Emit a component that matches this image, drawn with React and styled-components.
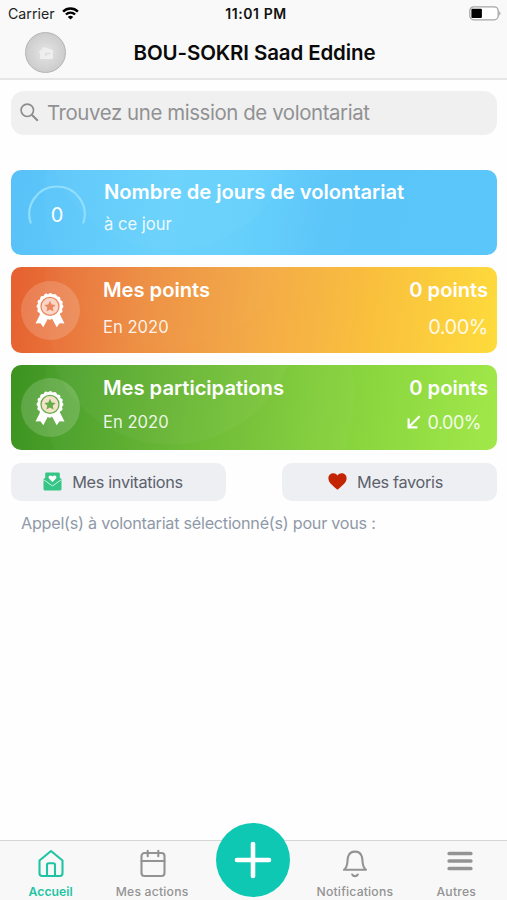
import React from "react";
import styled, { createGlobalStyle } from "styled-components";

const GlobalStyle = createGlobalStyle`
  * {
    box-sizing: border-box;
  }
  body {
    margin: 0;
    background: #fefefe;
    font-family: Inter, "Liberation Sans", sans-serif;
  }
`;

const Screen = styled.div`
  display: flex;
  flex-direction: column;
  height: 900px;
  width: 507px;
  overflow: hidden;
`;

const Top = styled.header`
  height: 80px;
  background: #f9f9f9;
  border-bottom: 2px solid #e6e6e6;
`;

const StatusBar = styled.div`
  display: grid;
  grid-template-columns: 1fr auto 1fr;
  align-items: center;
  height: 27px;
  padding: 0 6px 0 8px;
  color: #111;
  font-size: 14.2px;
`;

const Carrier = styled.div`
  display: flex;
  align-items: center;
  gap: 7px;
  color: #222;
`;

const Clock = styled.span`
  margin-left: 3px;
  font-weight: 600;
  font-size: 14px;
  letter-spacing: 0.6px;
`;

const BatterySlot = styled.div`
  display: flex;
  justify-content: flex-end;
`;

const NavBar = styled.div`
  display: grid;
  grid-template-columns: 80px 1fr 80px;
  align-items: center;
  height: 51px;
`;

const Avatar = styled.div`
  display: flex;
  align-items: center;
  justify-content: center;
  width: 41px;
  height: 41px;
  margin-left: 25px;
  border: 1.5px solid #b4b4b4;
  border-radius: 50%;
  background: radial-gradient(circle, #dedede 20%, #cbcbcb 75%);
`;

const Name = styled.h1`
  margin: 0 0 0 2px;
  text-align: center;
  white-space: nowrap;
  font-size: 20.5px;
  line-height: 26px;
  font-weight: 600;
  letter-spacing: -0.12px;
  color: #0a0a0a;
`;

const Main = styled.main`
  flex: 1;
  padding: 11px 10px 0 11px;
`;

const SearchBox = styled.div`
  display: flex;
  align-items: center;
  gap: 8px;
  height: 44px;
  padding: 0 0 1px 9px;
  border-radius: 13px;
  background: #f0f0f0;
  color: #919193;
  font-size: 20.4px;
  letter-spacing: -0.4px;
`;

const Cards = styled.div`
  display: grid;
  gap: 12px;
  margin-top: 34.5px;
`;

const Card = styled.section`
  display: flex;
  height: 85.5px;
  border-radius: 10px;
  background: ${(props) => props.$bg};
  color: #fff;
  padding-right: 9px;
`;

const Emblem = styled.div`
  display: flex;
  flex: none;
  align-items: center;
  justify-content: center;
  width: 59px;
  height: 59px;
  margin: 13.5px 23.5px 0 9.5px;
  border-radius: 50%;
  background: rgba(255, 255, 255, 0.17);
`;

const Gauge = styled.div`
  display: grid;
  flex: none;
  width: 60px;
  height: 59px;
  margin: 14px 17px 0 16px;

  > * {
    grid-area: 1 / 1;
  }
`;

const GaugeValue = styled.span`
  align-self: center;
  justify-self: center;
  font-size: 20px;
  line-height: 24px;
  padding-top: 4px;
`;

const CardBody = styled.div`
  display: flex;
  flex: 1;
  flex-direction: column;
  justify-content: space-between;
  padding: ${(props) => props.$top || 9}px 0 ${(props) => props.$bottom}px;
`;

const CardLine = styled.div`
  display: flex;
  align-items: center;
  justify-content: space-between;
  height: 26px;
  white-space: nowrap;
`;

const CardTitle = styled.span`
  font-size: 20.2px;
  font-weight: 600;
  letter-spacing: -0.03px;
`;

const CardNote = styled.span`
  font-size: 16.6px;
  color: rgba(255, 255, 255, 0.9);
`;

const Rate = styled.span`
  display: flex;
  align-items: center;
  gap: 6px;
  margin-right: ${(props) => (props.$small ? 7 : 0)}px;
  font-size: ${(props) => (props.$small ? 18 : 20)}px;
  letter-spacing: -0.5px;
  color: rgba(255, 255, 255, 0.9);
`;

const Shortcuts = styled.div`
  display: flex;
  justify-content: space-between;
  margin-top: 12.5px;
`;

const Shortcut = styled.button`
  display: flex;
  align-items: center;
  justify-content: center;
  gap: 10px;
  width: 215px;
  height: 38.5px;
  padding: 0 ${(props) => props.$shift}px 0 0;
  border: 0;
  border-radius: 10px;
  background: #eeeff3;
  color: #5c616c;
  font-family: inherit;
  font-size: 16.3px;
  letter-spacing: -0.34px;
`;

const Caption = styled.p`
  margin: 12px 0 0 10px;
  font-size: 16.2px;
  line-height: 20px;
  color: #8f99a8;
  white-space: nowrap;
  letter-spacing: -0.25px;
`;

const TabBar = styled.nav`
  display: grid;
  grid-template-columns: repeat(5, 1fr);
  height: 60px;
  border-top: 1px solid #d6d6d6;
  background: #f8f8f8;
`;

const Tab = styled.div`
  display: flex;
  flex-direction: column;
  align-items: center;
  padding-top: 7px;
  color: ${(props) => (props.$active ? "#1fc4a4" : "#939393")};

  svg {
    margin-left: ${(props) => props.$nudge || 0}px;
  }
`;

const TabLabel = styled.span`
  margin-top: 5px;
  font-size: 12.2px;
  line-height: 16px;
  font-weight: ${(props) => (props.$active ? 600 : 500)};
  letter-spacing: ${(props) => (props.$active ? 0.05 : 0.2)}px;
  white-space: nowrap;
`;

const AddButton = styled.button`
  display: flex;
  align-items: center;
  justify-content: center;
  justify-self: center;
  width: 74px;
  height: 74px;
  margin-top: -18px;
  padding: 0;
  border: 0;
  border-radius: 50%;
  background: #0fc8b4;
`;

const rings = (inner, outer) => `radial-gradient(circle at 160px -46px, rgba(255, 255, 255, ${inner}) 125px, transparent 126px),
  radial-gradient(circle at 188px 30px, rgba(255, 255, 255, ${outer}) 154px, transparent 156px)`;

const BLUE = `${rings(0.02, 0.015)},
  linear-gradient(98deg, #58c1f8 0%, #5ec9fa 15%, #68d1fc 32%, #64cffb 48%, #5ac5f9 65%, #5ac6fa 100%)`;
const ORANGE = `${rings(0.012, 0.02)},
  linear-gradient(98deg, #e5602f 0%, #e97339 12%, #ed8d40 27%, #f3a843 50%, #f8ba3d 68%, #fedb3c 100%)`;
const GREEN = `${rings(0.03, 0.025)},
  linear-gradient(98deg, #3c921f 0%, #4aa029 12%, #5dae2e 27%, #78c437 52%, #88d43e 70%, #a1e84a 100%)`;

const WifiIcon = () => (
  <svg width="17" height="13" viewBox="0 0 17 13" fill="none" stroke="#000" strokeWidth="2.4">
    <path d="M1.1 4.6C5.2.5 11.8.5 15.9 4.6" />
    <path d="M3.9 7.5c2.6-2.5 6.6-2.5 9.2 0" />
    <path d="M8.5 12.6 5.8 9.9c1.5-1.5 3.9-1.5 5.4 0z" fill="#000" stroke="none" />
  </svg>
);

const BatteryIcon = () => (
  <svg width="32" height="15" viewBox="0 0 32 15">
    <rect x="0.8" y="0.8" width="28.4" height="13" rx="4" fill="#fff" stroke="#a5a5a5" strokeWidth="1.3" />
    <rect x="2.4" y="2.7" width="10.5" height="9.3" rx="1" fill="#000" />
    <path d="M30.3 5.2c1.5.6 1.5 3.7 0 4.4z" fill="#999" />
  </svg>
);

const AvatarIcon = () => (
  <svg width="18" height="16" viewBox="0 0 18 16">
    <path d="M1.5 7 7 2l9 3v9H3V8z" fill="#f0f0f0" opacity="0.9" />
    <path d="M9 11V8.500h4" stroke="#d8d8d8" strokeWidth="1.2" fill="none" />
  </svg>
);

const SearchIcon = () => (
  <svg width="19" height="19" viewBox="0 0 19 19" fill="none" stroke="#8c8c8e" strokeWidth="1.6">
    <circle cx="7.3" cy="7.3" r="6.2" />
    <path d="m11.8 11.8 6 6" strokeWidth="2" />
  </svg>
);

const MedalIcon = ({ disc, star }) => (
  <svg width="30" height="36" viewBox="0 0 30 36">
    <path d="M6.300 20 .5 31.500l4.900-.3 2.900 4L14 24.500zM23.700 20l5.800 11.500-4.900-.3-2.900 4L16 24.500z" fill="#fff" />
    <circle cx="15" cy="14.4" r="12.4" fill="#fff" />
    <circle
      cx="15"
      cy="14.4"
      r="11.6"
      fill="none"
      stroke="#fff"
      strokeWidth="3.7"
      strokeLinecap="round"
      strokeDasharray="0.1 4.455"
    />
    <circle cx="15" cy="14.4" r="9" fill={disc} stroke={star} strokeWidth="1.3" />
    <path d="m15 8.700 1.700 3.700 4 .5-3 2.700.8 4-3.500-2-3.500 2 .8-4-3-2.700 4-.5z" fill={star} />
  </svg>
);

const GaugeArc = () => (
  <svg width="60" height="59" viewBox="0 0 60 59" fill="none">
    <path d="M3.900 39.500A27.700 27.700 0 1 1 56.100 39.500" stroke="#90defd" strokeWidth="2.2" />
  </svg>
);

const DownArrow = () => (
  <svg width="14" height="14" viewBox="0 0 14 14" fill="none" stroke="#fff" strokeWidth="2.1">
    <path d="M12.600 1.200 2 11.800M1.600 3.600v8.800h8.800" />
  </svg>
);

const InviteIcon = () => (
  <svg width="19" height="19" viewBox="0 0 19 19">
    <path d="M2.200 1.500Q2.200.4 3.500.4h12q1.300 0 1.300 1.100v4.200l1.700 1.200v10q0 1.600-1.600 1.600H2.100Q.5 18.500.5 16.900v-10l1.700-1.200z" fill="#35c586" />
    <path d="m.8 7.800 8.700 6.200 8.700-6.200" fill="none" stroke="#c8f3df" strokeWidth="1" />
    <path d="M9.500 10 6 6.600C4.400 4.500 7.300 2.200 9.500 4.500c2.200-2.300 5.100 0 3.500 2.100z" fill="#fff" />
  </svg>
);

const HeartIcon = () => (
  <svg width="19" height="17" viewBox="0 0 19 17">
    <path d="M9.500 16.700C4.500 12.500.4 9.400.4 5.200c0-5 6.500-6.700 9.100-2.700 2.600-4 9.100-2.300 9.100 2.700 0 4.200-4.100 7.300-9.100 11.500z" fill="#c22404" />
  </svg>
);

const iconProps = {
  width: 30,
  height: 31,
  viewBox: "0 0 30 31",
  fill: "none",
  stroke: "currentColor",
  strokeWidth: 2.1,
  strokeLinecap: "round",
  strokeLinejoin: "round",
};

const HomeIcon = () => (
  <svg {...iconProps}>
    <path d="M3.500 12.500 15 3l11.500 9.500v12.800q0 2.700-2.700 2.700H6.200q-2.700 0-2.700-2.700z" />
    <path d="M11 27.500V17q0-1.700 1.700-1.700h4.600q1.700 0 1.700 1.700v10.500" />
  </svg>
);

const CalendarIcon = () => (
  <svg {...iconProps}>
    <rect x="3.500" y="5" width="23" height="23" rx="3" />
    <path d="M3.500 13h23M9.700 2.800v5.500M20.300 2.800v5.500" />
  </svg>
);

const BellIcon = () => (
  <svg {...iconProps}>
    <path d="M4 21.800h22c-5-4-2.500-9-4.300-13.700-2-6-11.400-6-13.400 0C6.500 12.800 9 17.800 4 21.800z" />
    <path d="M12.200 26.500c1 2.100 4.600 2.100 5.600 0" />
  </svg>
);

const MenuIcon = () => (
  <svg {...iconProps} strokeWidth="3.700">
    <path d="M4.200 5.500h21.600M4.200 13h21.600M4.200 20.500h21.600" />
  </svg>
);

const PlusIcon = () => (
  <svg width="38" height="38" viewBox="0 0 38 38" stroke="#fff" strokeWidth="4.600" strokeLinecap="round">
    <path d="M19 3v32M3 19h32" />
  </svg>
);

const App = () => {
  return (
    <>
      <GlobalStyle />
      <Screen>
        <Top>
          <StatusBar>
            <Carrier>
              Carrier <WifiIcon />
            </Carrier>
            <Clock>11:01 PM</Clock>
            <BatterySlot>
              <BatteryIcon />
            </BatterySlot>
          </StatusBar>
          <NavBar>
            <Avatar>
              <AvatarIcon />
            </Avatar>
            <Name>BOU-SOKRI Saad Eddine</Name>
          </NavBar>
        </Top>

        <Main>
          <SearchBox>
            <SearchIcon />
            <span>Trouvez une mission de volontariat</span>
          </SearchBox>

          <Cards>
            <Card $bg={BLUE}>
              <Gauge>
                <GaugeArc />
                <GaugeValue>0</GaugeValue>
              </Gauge>
              <CardBody $bottom={18}>
                <CardLine>
                  <CardTitle>Nombre de jours de volontariat</CardTitle>
                </CardLine>
                <CardLine>
                  <CardNote>à ce jour</CardNote>
                </CardLine>
              </CardBody>
            </Card>

            <Card $bg={ORANGE}>
              <Emblem>
                <MedalIcon disc="#fbd5c5" star="#e9875f" />
              </Emblem>
              <CardBody $bottom={13}>
                <CardLine>
                  <CardTitle>Mes points</CardTitle>
                  <CardTitle>0 points</CardTitle>
                </CardLine>
                <CardLine>
                  <CardNote>En 2020</CardNote>
                  <Rate>0.00%</Rate>
                </CardLine>
              </CardBody>
            </Card>

            <Card $bg={GREEN}>
              <Emblem>
                <MedalIcon disc="#f3e3c8" star="#68ad4b" />
              </Emblem>
              <CardBody $top={10} $bottom={15}>
                <CardLine>
                  <CardTitle>Mes participations</CardTitle>
                  <CardTitle>0 points</CardTitle>
                </CardLine>
                <CardLine>
                  <CardNote>En 2020</CardNote>
                  <Rate $small>
                    <DownArrow /> 0.00%
                  </Rate>
                </CardLine>
              </CardBody>
            </Card>
          </Cards>

          <Shortcuts>
            <Shortcut $shift={11}>
              <InviteIcon />
              Mes invitations
            </Shortcut>
            <Shortcut $shift={8}>
              <HeartIcon />
              Mes favoris
            </Shortcut>
          </Shortcuts>

          <Caption>Appel(s) à volontariat sélectionné(s) pour vous :</Caption>
        </Main>

        <TabBar>
          <Tab $active>
            <HomeIcon />
            <TabLabel $active>Accueil</TabLabel>
          </Tab>
          <Tab $nudge={1}>
            <CalendarIcon />
            <TabLabel>Mes actions</TabLabel>
          </Tab>
          <AddButton>
            <PlusIcon />
          </AddButton>
          <Tab>
            <BellIcon />
            <TabLabel>Notifications</TabLabel>
          </Tab>
          <Tab $nudge={8}>
            <MenuIcon />
            <TabLabel>Autres</TabLabel>
          </Tab>
        </TabBar>
      </Screen>
    </>
  );
};

export default App;
